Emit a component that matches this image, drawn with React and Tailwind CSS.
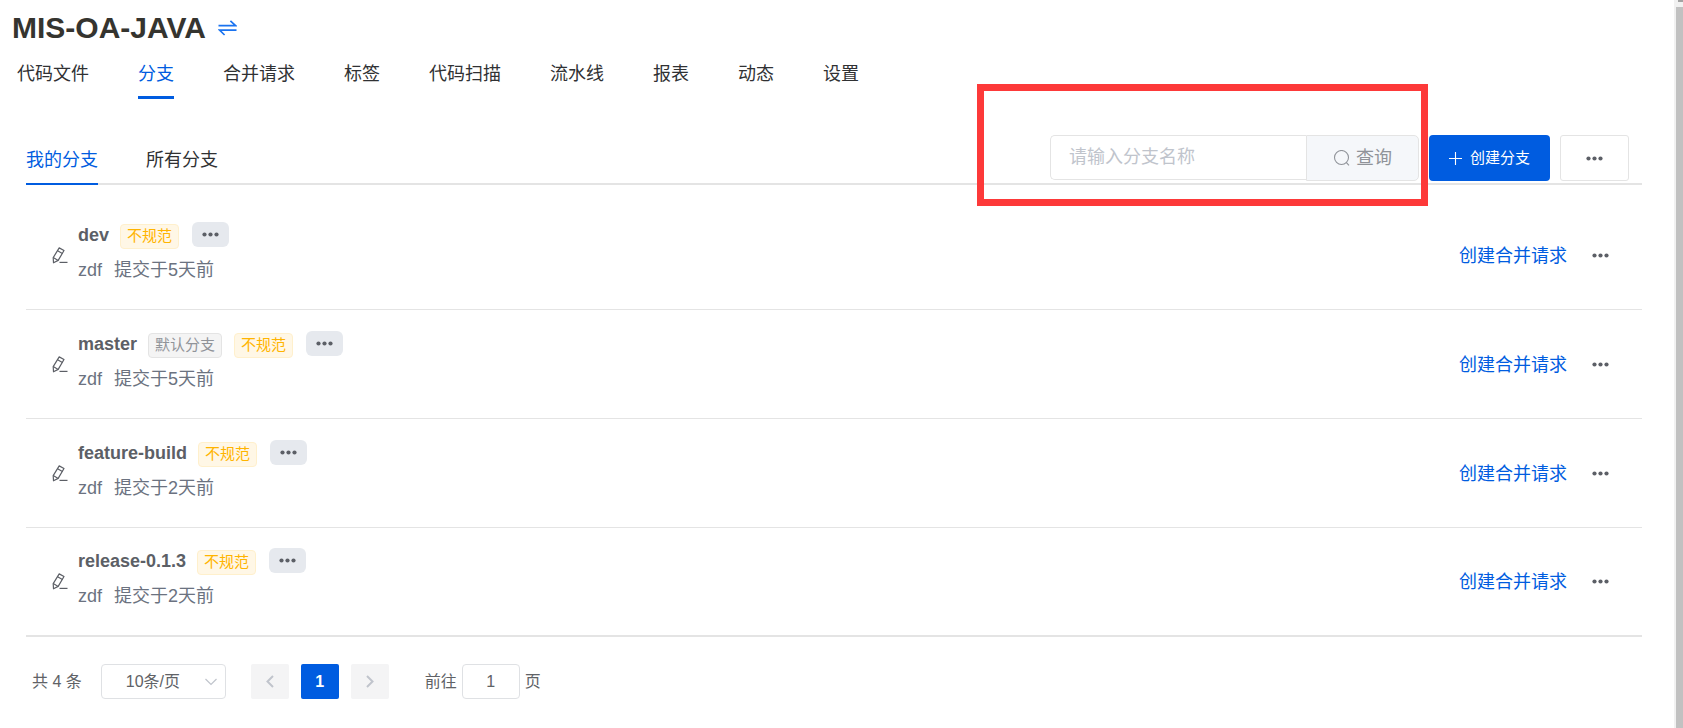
import React from 'react';

const TABS = ['代码文件', '分支', '合并请求', '标签', '代码扫描', '流水线', '报表', '动态', '设置'];

const BRANCHES = [
  { name: 'dev', author: 'zdf', time: '提交于5天前', isDefault: false },
  { name: 'master', author: 'zdf', time: '提交于5天前', isDefault: true },
  { name: 'feature-build', author: 'zdf', time: '提交于2天前', isDefault: false },
  { name: 'release-0.1.3', author: 'zdf', time: '提交于2天前', isDefault: false },
];

function SwapIcon() {
  return (
    <svg width="19" height="16" viewBox="0 0 19 16" fill="none" stroke="#1a73f0" strokeWidth="1.7" aria-hidden="true">
      <path d="M0.5 5.6H17.6L12.4 0.9" />
      <path d="M18.5 10.2H1.6L6.6 15" />
    </svg>
  );
}

function Dots() {
  return (
    <svg width="17" height="5" viewBox="0 0 17 5" fill="#5c5f66" aria-hidden="true">
      <circle cx="2.5" cy="2.5" r="2.1" />
      <circle cx="8.5" cy="2.5" r="2.1" />
      <circle cx="14.5" cy="2.5" r="2.1" />
    </svg>
  );
}

function PencilIcon() {
  return (
    <svg width="16" height="17" viewBox="0 0 16 17" fill="none" stroke="#5c5f66" strokeWidth="1.2" strokeLinejoin="round" aria-hidden="true">
      <path d="M7.2 0.9L12 3.5L6.2 13.4L1.5 15.8L1.2 10.6Z" />
      <path d="M5.6 3.7L10.4 6.4M1.2 10.6L6.2 13.4" />
      <path d="M7.5 15.4H15.5" />
    </svg>
  );
}

function SearchIcon() {
  return (
    <svg width="17" height="17" viewBox="0 0 17 17" fill="none" stroke="#909399" strokeWidth="1.1" aria-hidden="true">
      <circle cx="8.5" cy="7.5" r="7" />
      <path d="M13.2 12.4L16 15.4" />
    </svg>
  );
}

function PlusIcon() {
  return (
    <svg width="13" height="13" viewBox="0 0 13 13" stroke="#fff" strokeWidth="1.1" aria-hidden="true">
      <path d="M0 6.5H13M6.5 0V13" />
    </svg>
  );
}

function Chevron({ d, width, height, strokeWidth }) {
  return (
    <svg width={width} height={height} viewBox={`0 0 ${width} ${height}`} fill="none" stroke="#c0c4cc" strokeWidth={strokeWidth} aria-hidden="true">
      <path d={d} />
    </svg>
  );
}

function Tag({ tone, children }) {
  const colors =
    tone === 'warning'
      ? 'border-[#fff0cc] bg-[#fff7e6] text-[#ffb400]'
      : 'border-[#e4e4e4] bg-[#f4f4f4] text-[#909399]';
  return (
    <span className={`flex h-[25px] items-center rounded border px-1.5 text-[15px] ${colors}`}>{children}</span>
  );
}

function BranchRow({ branch }) {
  return (
    <li className="flex h-[109px] items-center border-b border-[#e4e4e4] pr-[33px] pl-[26px] last:border-b-2">
      <PencilIcon />
      <div className="ml-[10px] flex-1 pb-1.5 text-[18px]">
        <div className="flex h-9 items-center">
          <span className="mr-[11px] font-bold text-[#5c5f66]">{branch.name}</span>
          <div className="flex items-start gap-[13px]">
            <div className="flex gap-3 pt-0.5">
              {branch.isDefault && <Tag>默认分支</Tag>}
              <Tag tone="warning">不规范</Tag>
            </div>
            <button type="button" aria-label="更多" className="flex h-[25px] w-[37px] items-center justify-center rounded-md bg-[#e6e9ee]">
              <Dots />
            </button>
          </div>
        </div>
        <div className="flex h-[34px] items-center gap-3 text-[#6b7280]">
          <span>{branch.author}</span>
          <span>{branch.time}</span>
        </div>
      </div>
      <a href="#merge" className="mr-[25px] pt-0.5 text-[18px] text-[#005ce0]">创建合并请求</a>
      <button type="button" aria-label="更多操作">
        <Dots />
      </button>
    </li>
  );
}

export default function App() {
  return (
    <div className="flex min-h-screen bg-white font-['Liberation_Sans','Noto_Sans_CJK_SC',sans-serif] text-[#303133]">
      <div className="min-w-0 flex-1">
        <header>
          <div className="flex h-[54px] items-center gap-3 pl-3">
            <h1 className="text-[30px] font-bold text-[#35342f]">MIS-OA-JAVA</h1>
            <button type="button" aria-label="切换仓库" className="pt-0.5">
              <SwapIcon />
            </button>
          </div>
          <nav className="flex gap-[49px] pl-[17px] text-[18px]">
            {TABS.map((tab) => (
              <a
                key={tab}
                href="#tab"
                className={
                  tab === '分支'
                    ? 'border-b-3 border-[#005ce0] pb-px leading-[41px] text-[#005ce0]'
                    : 'border-b-3 border-transparent pb-px leading-[41px]'
                }
              >
                {tab}
              </a>
            ))}
          </nav>
        </header>

        <main className="mt-9 pr-8 pl-[26px]">
          <div className="flex h-[50px] border-b-2 border-[#e4e4e4]">
            <div className="flex flex-1 gap-12 text-[18px]">
              <a href="#mine" className="h-[50px] border-b-2 border-[#005ce0] pt-0.5 leading-[46px] text-[#005ce0]">我的分支</a>
              <a href="#all" className="pt-0.5 leading-[46px]">所有分支</a>
            </div>
            <div className="flex h-[46px] gap-[10px] pr-[13px]">
              <form className="relative flex text-[18px]" onSubmit={(e) => e.preventDefault()}>
                <input
                  type="text"
                  aria-label="分支名称"
                  placeholder="请输入分支名称"
                  className="h-[45px] w-64 rounded-l-[5px] border border-r-0 border-[#e4e4e4] bg-white px-[18px] outline-none placeholder:text-[#c0c4cc]"
                />
                <button type="submit" className="flex w-[113px] items-center justify-center gap-1.5 rounded-r-[5px] border border-[#e4e4e4] bg-[#f5f7fa] text-[#909399]">
                  <SearchIcon />
                  查询
                </button>
                <div className="pointer-events-none absolute -top-[51px] -right-[9px] -bottom-[25px] -left-[73px] border-7 border-[#fd3939]" />
              </form>
              <button type="button" className="flex w-[121px] items-center justify-center gap-2 rounded bg-[#005ce0] text-[15px] text-white">
                <PlusIcon />
                创建分支
              </button>
              <button type="button" aria-label="更多" className="flex w-[69px] items-center justify-center rounded-[3px] border border-[#e4e4e4] bg-white">
                <Dots />
              </button>
            </div>
          </div>

          <ul className="pt-4">
            {BRANCHES.map((branch) => (
              <BranchRow key={branch.name} branch={branch} />
            ))}
          </ul>

          <div className="flex items-center pt-[27px] pb-7 pl-1.5 text-[16px] text-[#606266]">
            <span>共 4 条</span>
            <div className="relative ml-[19px]">
              <select aria-label="每页条数" defaultValue="10" className="h-[35px] w-[125px] appearance-none rounded border border-[#dfe1e4] bg-white pl-6 outline-none">
                <option value="10">10条/页</option>
                <option value="20">20条/页</option>
                <option value="50">50条/页</option>
              </select>
              <span className="pointer-events-none absolute inset-y-0 right-[9px] flex items-center">
                <Chevron d="M0.5 1L6 6.5L11.5 1" width={12} height={8} strokeWidth={1.2} />
              </span>
            </div>
            <div className="ml-[25px] flex gap-3">
              <button type="button" aria-label="上一页" className="flex h-[35px] w-[38px] items-center justify-center rounded-xs bg-[#f4f4f5]">
                <Chevron d="M7 1L1.5 6.5L7 12" width={8} height={13} strokeWidth={2} />
              </button>
              <button type="button" className="h-[35px] w-[38px] rounded-xs bg-[#005ce0] font-bold text-white">1</button>
              <button type="button" aria-label="下一页" className="flex h-[35px] w-[38px] items-center justify-center rounded-xs bg-[#f4f4f5]">
                <Chevron d="M1 1L6.5 6.5L1 12" width={8} height={13} strokeWidth={2} />
              </button>
            </div>
            <label className="ml-9 flex items-center gap-[5px]">
              前往
              <input type="text" defaultValue="1" className="h-[35px] w-[58px] rounded border border-[#dfe1e4] bg-white text-center outline-none" />
              页
            </label>
          </div>
        </main>
      </div>

      <div className="flex w-[9px] flex-col bg-[#f1f1f1] pl-0.5" aria-hidden="true">
        <div className="ml-0.5 h-0.5 bg-[#a3a3a3]" />
        <div className="mt-[5px] flex-1 bg-[#c1c1c1]" />
      </div>
    </div>
  );
}
